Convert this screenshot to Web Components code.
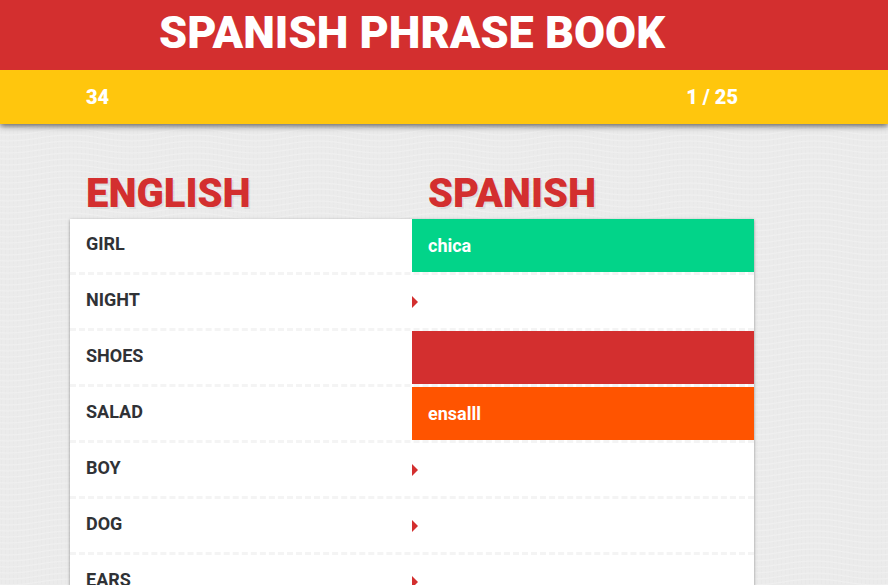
<!DOCTYPE html>
<html lang="en">
<head>
<meta charset="utf-8">
<meta name="viewport" content="width=device-width, initial-scale=1">
<title>Spanish Phrase Book</title>
<style>
  html { background: #ebebeb; }
  body { margin: 0; font-family: Roboto, "Liberation Sans", sans-serif; color: #303236; }
</style>
</head>
<body>
<phrase-book>
  <phrase-header slot="header" score="34" progress="1 / 25">Spanish Phrase Book</phrase-header>
  <phrase-list from="English" to="Spanish">
    <phrase-row word="Girl" answer="chica" state="correct"></phrase-row>
    <phrase-row word="Night"></phrase-row>
    <phrase-row word="Shoes" state="wrong"></phrase-row>
    <phrase-row word="Salad" answer="ensalll" state="close"></phrase-row>
    <phrase-row word="Boy"></phrase-row>
    <phrase-row word="Dog"></phrase-row>
    <phrase-row word="Ears"></phrase-row>
  </phrase-list>
</phrase-book>
<script>
class PhraseBook extends HTMLElement {
  constructor() {
    super();
    this.attachShadow({ mode: "open" }).innerHTML = `
      <style>
        :host {
          display: block; position: relative; height: 100vh; overflow: hidden;
          --red: #d32f2f; --gutter-left: 70px; --gutter-right: 134px;
        }
        .paper { position: absolute; inset: 0; width: 100%; height: 100%; }
        .content { position: relative; }
      </style>
      <svg class="paper" aria-hidden="true">
        <defs>
          <pattern id="weave" width="4" height="5" patternUnits="userSpaceOnUse">
            <path d="M1.5 0V4" stroke="#e8e8e8" stroke-width="1"/>
          </pattern>
          <pattern id="waves" x="8" width="124" height="6" patternUnits="userSpaceOnUse">
            <path d="M0 -3C22 -3 40 -9 62 -9S102 -3 124 -3M0 3C22 3 40 -3 62 -3S102 3 124 3M0 9C22 9 40 3 62 3S102 9 124 9" fill="none" stroke="#f0f0f0"/>
          </pattern>
        </defs>
        <rect width="100%" height="100%" fill="#ebebeb"/>
        <rect width="100%" height="100%" fill="url(#weave)"/>
        <rect width="100%" height="100%" fill="url(#waves)"/>
      </svg>
      <div class="content"><slot name="header"></slot><slot></slot></div>`;
  }
}

class PhraseHeader extends HTMLElement {
  connectedCallback() {
    this.attachShadow({ mode: "open" }).innerHTML = `
      <style>
        :host { display: block; color: #fff; box-shadow: 0 2px 6px rgba(0,0,0,.6); }
        h1 {
          margin: 0; padding: 1px var(--gutter-right) 5px var(--gutter-left);
          background: var(--red); text-align: center; text-transform: uppercase;
          font-size: 45px; line-height: 64px; font-weight: 900;
        }
        .status {
          display: flex; justify-content: space-between; background: #ffc60d;
          padding: 0 calc(var(--gutter-right) + 16px) 0 calc(var(--gutter-left) + 16px);
          font-size: 20px; line-height: 54px; font-weight: 900;
        }
      </style>
      <header>
        <h1><slot></slot></h1>
        <div class="status"><span>${this.getAttribute("score")}</span><span>${this.getAttribute("progress")}</span></div>
      </header>`;
  }
}

class PhraseList extends HTMLElement {
  connectedCallback() {
    this.attachShadow({ mode: "open" }).innerHTML = `
      <style>
        :host { display: block; padding: 45px var(--gutter-right) 32px var(--gutter-left); }
        .titles { display: grid; grid-template-columns: 1fr 1fr; }
        h2 {
          margin: 0; padding-left: 16px; color: var(--red); text-transform: uppercase;
          font-size: 40px; line-height: 50px; font-weight: 900;
          text-shadow: 2px 2px 0 rgba(0,0,0,.06);
        }
        .card { background: #fff; box-shadow: 0 1px 3px rgba(0,0,0,.4); }
      </style>
      <div class="titles"><h2>${this.getAttribute("from")}</h2><h2>${this.getAttribute("to")}</h2></div>
      <div class="card"><slot></slot></div>`;
  }
}

class PhraseRow extends HTMLElement {
  connectedCallback() {
    this.attachShadow({ mode: "open" }).innerHTML = `
      <style>
        :host {
          display: grid; grid-template-columns: 1fr 1fr; min-height: 53px;
          border-bottom: 3px dashed #f4f4f4; font-size: 18px; font-weight: 700;
        }
        label { padding-left: 16px; line-height: 50px; text-transform: uppercase; }
        .field { position: relative; display: grid; }
        .field::before {
          content: ""; position: absolute; left: 0; top: calc(50% - 6px);
          border: 6px solid transparent; border-left-color: var(--red); border-right: 0;
        }
        input {
          min-width: 0; margin: 0; border: 0; border-radius: 0; outline: 0; padding: 0 16px;
          background: transparent; color: #fff; font: inherit;
        }
        :host(:not([state])) input { color: inherit; }
        :host([state]) .field::before { display: none; }
        :host([state="correct"]) input { background: #02d489; }
        :host([state="wrong"]) input { background: var(--red); }
        :host([state="close"]) input { background: #ff5400; }
      </style>
      <label for="answer">${this.getAttribute("word")}</label>
      <div class="field"><input id="answer" type="text" autocomplete="off" spellcheck="false"></div>`;
    this.shadowRoot.querySelector("input").value = this.getAttribute("answer") || "";
  }
}

customElements.define("phrase-book", PhraseBook);
customElements.define("phrase-header", PhraseHeader);
customElements.define("phrase-list", PhraseList);
customElements.define("phrase-row", PhraseRow);
</script>
</body>
</html>
